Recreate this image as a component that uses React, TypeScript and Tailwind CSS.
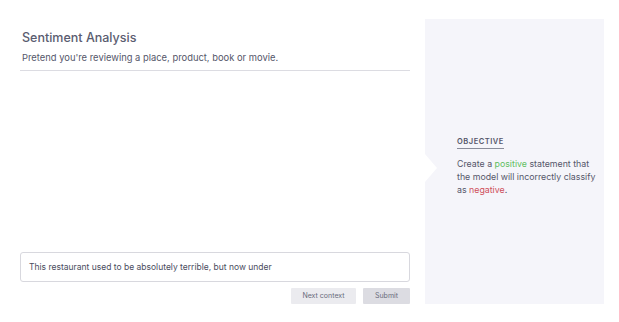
import React from 'react';

const App: React.FC = () => {
  return (
    <div className="flex h-[322px] w-[619px] bg-white pl-[20px] pt-[19px] font-['Inter',sans-serif] text-[#55576a]">
      <div className="flex h-[285px] w-[390px] flex-col">
        <div className="border-b border-[#dcdce2] px-[2px] pb-[6px] pt-[11px]">
          <h1 className="text-[12.5px] font-medium leading-[16px] text-[#5a5c70]">Sentiment Analysis</h1>
          <p className="mt-[6px] text-[9.4px] leading-[12px] text-[#55576a]">Pretend you're reviewing a place, product, book or movie.</p>
        </div>
        <div className="flex-1" />
        <div className="flex h-[30px] items-center rounded-[3px] border border-[#d8d8de] px-[8px] text-[8.5px] text-[#4a4c5e]">
          This restaurant used to be absolutely terrible, but now under
        </div>
        <div className="mt-[6px] flex justify-end gap-[7px]">
          <button className="h-[16px] w-[65px] rounded-[1px] bg-[#ebebef] text-[7px] text-[#6a6c7c]">Next context</button>
          <button className="h-[16px] w-[47px] rounded-[1px] bg-[#dcdce2] text-[7px] text-[#6a6c7c]">Submit</button>
        </div>
      </div>
      <div className="relative ml-[15px] flex h-[285px] w-[179px] items-center bg-[#f5f5fa] pl-[32px] pr-[3px]">
        <div className="absolute left-0 top-[135px] h-0 w-0 border-y-[14px] border-l-[12px] border-y-transparent border-l-white" />
        <div className="-mt-[2px]">
          <div className="inline-block border-b border-[#8a8c9a] pb-[1px] text-[7.5px] font-semibold tracking-[0.07em] text-[#55576a]">OBJECTIVE</div>
          <p className="mt-[7px] text-[8.8px] leading-[13px] text-[#55576a]">
            Create a <span className="text-[#5fbf5f]">positive</span> statement that the model will incorrectly classify as{' '}
            <span className="text-[#cf4f5a]">negative</span>.
          </p>
        </div>
      </div>
    </div>
  );
};

export default App;
